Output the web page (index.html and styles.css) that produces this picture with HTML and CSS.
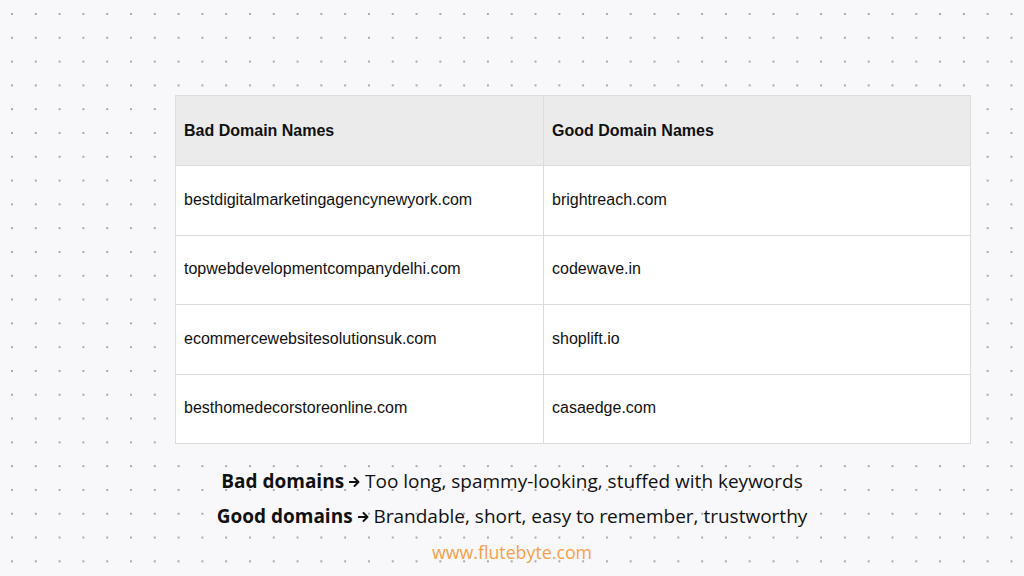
FILE: index.html
```html
<!DOCTYPE html>
<html>
<head>
<meta charset="utf-8">
<link rel="stylesheet" href="styles.css">
</head>
<body>
<div class="page">
  <table class="domains">
    <thead>
      <tr><th class="col-bad">Bad Domain Names</th><th>Good Domain Names</th></tr>
    </thead>
    <tbody>
      <tr><td>bestdigitalmarketingagencynewyork.com</td><td>brightreach.com</td></tr>
      <tr><td>topwebdevelopmentcompanydelhi.com</td><td>codewave.in</td></tr>
      <tr><td>ecommercewebsitesolutionsuk.com</td><td>shoplift.io</td></tr>
      <tr><td>besthomedecorstoreonline.com</td><td>casaedge.com</td></tr>
    </tbody>
  </table>
  <div class="notes">
    <p class="note"><b>Bad domains</b> <svg class="arrow" width="11" height="10" viewBox="0 0 11 10"><path d="M0.5 5 H9.5 M5.5 1 L9.5 5 L5.5 9" fill="none" stroke="#111" stroke-width="1.9" stroke-linecap="round" stroke-linejoin="round"/></svg> Too long, spammy-looking, stuffed with keywords</p>
    <p class="note"><b>Good domains</b> <svg class="arrow" width="11" height="10" viewBox="0 0 11 10"><path d="M0.5 5 H9.5 M5.5 1 L9.5 5 L5.5 9" fill="none" stroke="#111" stroke-width="1.9" stroke-linecap="round" stroke-linejoin="round"/></svg> Brandable, short, easy to remember, trustworthy</p>
    <p class="site">www.flutebyte.com</p>
  </div>
</div>
</body>
</html>
```
FILE: styles.css
```css
html, body {
  margin: 0;
  padding: 0;
}
body {
  width: 1024px;
  height: 576px;
  overflow: hidden;
  background-color: #f8f8fa;
  background-image: radial-gradient(circle, #a9a9ae 0.9px, transparent 1.3px);
  background-size: 23.8px 23.8px;
  background-position: 0.1px 2.1px;
}
.page {
  display: flex;
  flex-direction: column;
  align-items: center;
  padding-top: 95px;
}
.domains {
  align-self: flex-start;
  margin-left: 175px;
  border-collapse: collapse;
  width: 796px;
  font-family: "Liberation Sans", Arial, sans-serif;
  font-size: 16px;
  color: #111;
  background: #ffffff;
  table-layout: fixed;
}
.domains th, .domains td {
  border: 1px solid #dcdcdc;
  height: 69.5px;
  padding: 0 0 1px 8px;
  text-align: left;
  vertical-align: middle;
  box-sizing: border-box;
}
.domains th {
  height: 70px;
  background: #ebebeb;
  font-weight: bold;
  padding: 1px 0 0 8px;
}
.domains .col-bad {
  width: 368px;
}
.notes {
  display: flex;
  flex-direction: column;
  align-items: center;
  margin-top: 20px;
  font-family: "Open Sans", "Noto Sans", sans-serif;
  color: #111;
}
.note {
  margin: 0;
  font-size: 19px;
  line-height: 35px;
}
.note b {
  font-weight: 700;
}
.arrow {
  vertical-align: 1px;
}
.site {
  margin: 0;
  font-size: 17.8px;
  line-height: 36px;
  color: #f7a04a;
}
```
